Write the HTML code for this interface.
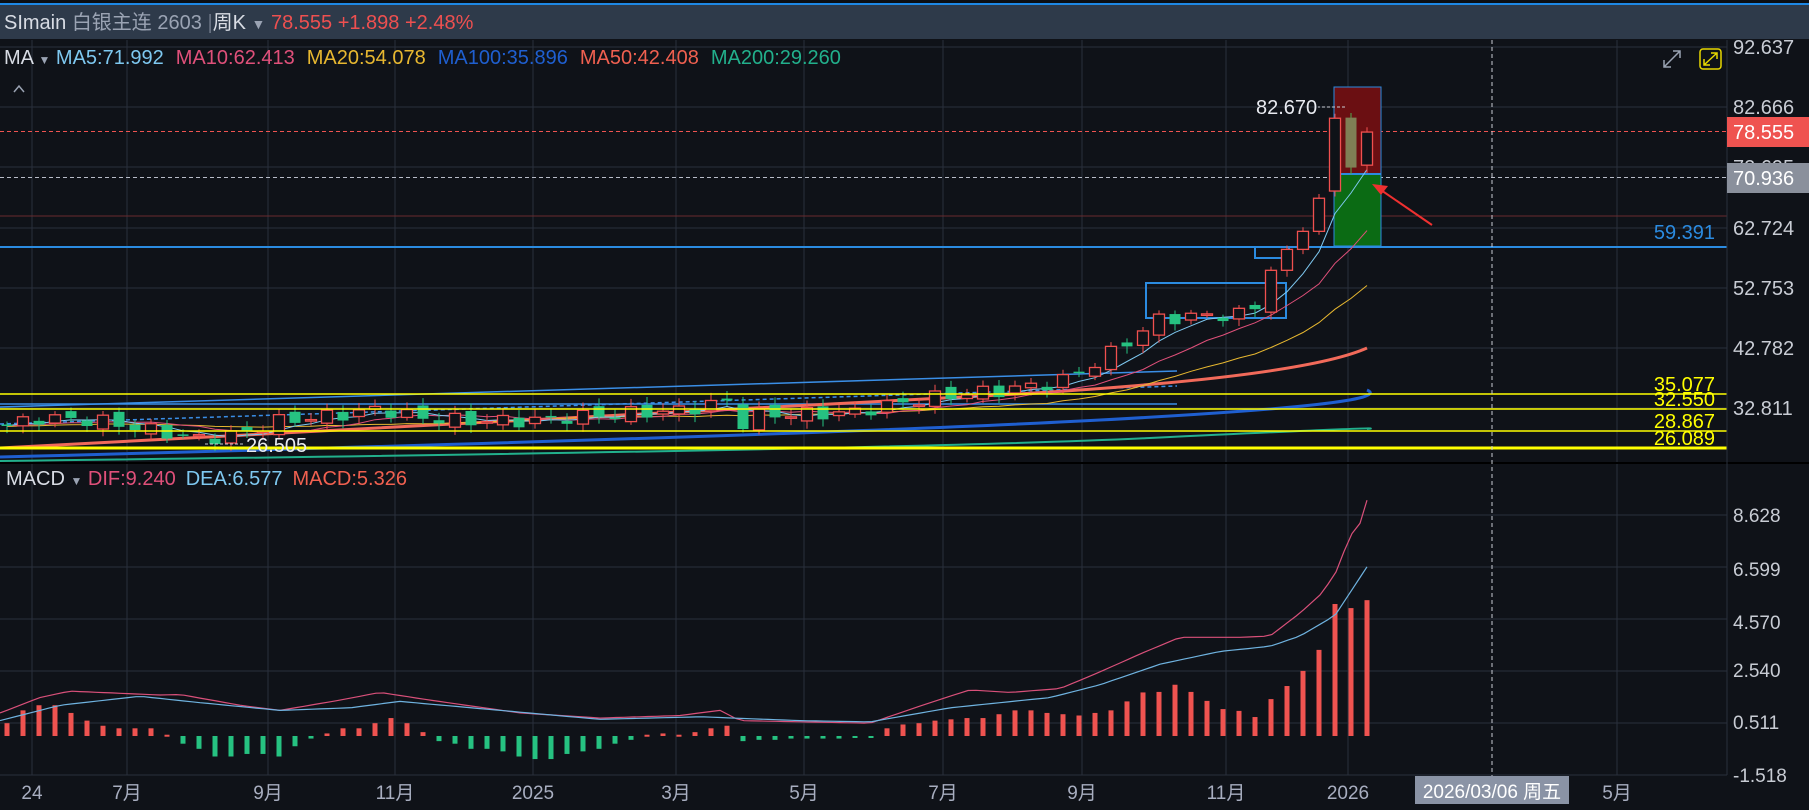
<!DOCTYPE html>
<html><head><meta charset="utf-8"><style>
html,body{margin:0;padding:0;background:#0f1218;width:1809px;height:810px;overflow:hidden}
svg{position:absolute;left:0;top:0}
text{font-family:"Liberation Sans","Noto Sans CJK SC",sans-serif}
</style></head><body>
<svg id="s" width="1809" height="810" xmlns="http://www.w3.org/2000/svg">
<rect width="1809" height="810" fill="#0f1218"/>
<rect x="0" y="0" width="1809" height="3" fill="#0c0f14"/>
<rect x="0" y="3" width="1809" height="2" fill="#1e88e5"/>
<rect x="0" y="5" width="1809" height="34" fill="#2e3a4a"/>
<g id="grid" stroke="#2a303c" stroke-width="1"></g>
<g id="main"></g>
<line x1="0" y1="463" x2="1809" y2="463" stroke="#000" stroke-width="2"/>
<line x1="1727" y1="40" x2="1727" y2="775" stroke="#2a303c"/>
<line x1="1492" y1="40" x2="1492" y2="776" stroke="#c8ccd4" stroke-dasharray="4,3"/>
<text x="4" y="29" font-size="20" fill="#d8dce4">SImain <tspan fill="#9aa3b3">白银主连 2603</tspan> <tspan fill="#6b7585">|</tspan><tspan fill="#d8dce4">周K</tspan> <tspan fill="#9aa3b3" font-size="14">▼</tspan>  <tspan fill="#ee5050">78.555 +1.898 +2.48%</tspan></text>
<text x="4" y="64" font-size="20" fill="#d8dce4">MA <tspan fill="#9aa3b3" font-size="12">▼</tspan> <tspan fill="#7ec8f0">MA5:71.992</tspan><tspan dx="12" fill="#e0507a">MA10:62.413</tspan><tspan dx="12" fill="#e8b830">MA20:54.078</tspan><tspan dx="12" fill="#1f5fd0">MA100:35.896</tspan><tspan dx="12" fill="#f06050">MA50:42.408</tspan><tspan dx="12" fill="#22b08c">MA200:29.260</tspan></text>
<path d="M14 92 L19 86 L24 92" stroke="#9aa3b3" stroke-width="1.5" fill="none"/>
<g stroke="#9aa3b3" stroke-width="1.5" fill="none"><path d="M1664 67 L1680 51 M1673 51 L1680 51 L1680 58 M1664 60 L1664 67 L1671 67"/></g>
<rect x="1700" y="49" width="21" height="20" rx="3" fill="none" stroke="#e8d800" stroke-width="1.5"/>
<path d="M1704 65 L1717 53 M1711 53 L1717 53 L1717 59 M1704 59 L1704 65 L1710 65" stroke="#e8d800" stroke-width="1.5" fill="none"/>
<g font-size="20" fill="#c8ccd4">
<text x="1733" y="54">92.637</text><text x="1733" y="114">82.666</text><text x="1733" y="174">72.695</text>
<text x="1733" y="235">62.724</text><text x="1733" y="295">52.753</text><text x="1733" y="355">42.782</text><text x="1733" y="415">32.811</text>
</g>
<rect x="1727" y="117" width="82" height="30" fill="#ef5350"/>
<text x="1733" y="139" font-size="20" fill="#fff">78.555</text>
<rect x="1727" y="163" width="82" height="30" fill="#8a909c"/>
<text x="1733" y="185" font-size="20" fill="#fff">70.936</text>
<text x="6" y="485" font-size="20" fill="#d8dce4">MACD <tspan fill="#9aa3b3" font-size="12">▼</tspan> <tspan fill="#e0507a">DIF:9.240</tspan><tspan dx="10" fill="#7ec8f0">DEA:6.577</tspan><tspan dx="10" fill="#f06050">MACD:5.326</tspan></text>
<g font-size="19" fill="#c8ccd4">
<text x="1733" y="522">8.628</text><text x="1733" y="576">6.599</text><text x="1733" y="629">4.570</text>
<text x="1733" y="677">2.540</text><text x="1733" y="729">0.511</text><text x="1733" y="782">-1.518</text>
</g>
<g font-size="19" fill="#a8aec0" text-anchor="middle">
<text x="32" y="799">24</text><text x="127" y="799">7月</text><text x="268" y="799">9月</text><text x="395" y="799">11月</text>
<text x="533" y="799">2025</text><text x="676" y="799">3月</text><text x="804" y="799">5月</text><text x="943" y="799">7月</text>
<text x="1082" y="799">9月</text><text x="1226" y="799">11月</text><text x="1348" y="799">2026</text><text x="1617" y="799">5月</text>
</g>
<rect x="1415" y="776" width="154" height="28" fill="#8a93a5"/>
<text x="1492" y="798" font-size="19" fill="#fff" text-anchor="middle">2026/03/06 周五</text>
</svg>
<script>
var NS="http://www.w3.org/2000/svg",S=document.getElementById('s'),G=document.getElementById('grid'),M=document.getElementById('main');
function el(p,t,a,txt){var e=document.createElementNS(NS,t);for(var k in a)e.setAttribute(k,a[k]);if(txt)e.textContent=txt;p.appendChild(e);return e;}
[47,107,167,228,288,348,408,515,567,619,671,723,775].forEach(function(y){el(G,'line',{x1:0,y1:y,x2:1727,y2:y});});
[32,127,268,395,533,676,804,943,1082,1226,1348,1617].forEach(function(x){el(G,'line',{x1:x,y1:40,x2:x,y2:775});});
function Y(p){return 47+(92.637-p)*6.017;}
function interp(k,x){for(var i=0;i<k.length-1;i++){if(x<=k[i+1][0]){var t=(x-k[i][0])/(k[i+1][0]-k[i][0]);return k[i][1]+t*(k[i+1][1]-k[i][1]);}}return k[k.length-1][1];}
el(M,'line',{x1:0,y1:404,x2:1177,y2:404,stroke:'#3a8ee6','stroke-width':1.5});
el(M,'line',{x1:0,y1:407,x2:1177,y2:371,stroke:'#3a8ee6','stroke-width':1.5});
el(M,'line',{x1:0,y1:424,x2:1177,y2:386,stroke:'#3a8ee6','stroke-width':1.5,'stroke-dasharray':'4,3'});
el(M,'path',{d:'M0 448 Q700 412 1000 395 T1367 348',stroke:'#f26a5a','stroke-width':3,fill:'none'});
el(M,'path',{d:'M0 457 Q800 436 1100 420 T1367 390',stroke:'#1f5fd0','stroke-width':3,fill:'none'});
el(M,'path',{d:'M0 461 Q900 450 1150 438 T1367 429',stroke:'#22b08c','stroke-width':2,fill:'none'});
el(M,'rect',{x:1146,y:283,width:140,height:35,fill:'none',stroke:'#2b8be0','stroke-width':2});
el(M,'rect',{x:1255,y:247,width:34,height:11,fill:'none',stroke:'#2b8be0','stroke-width':2});
el(M,'line',{x1:0,y1:216,x2:1727,y2:216,stroke:'#6a2a2e','stroke-width':1});
el(M,'line',{x1:0,y1:131.5,x2:1727,y2:131.5,stroke:'#ef5350','stroke-dasharray':'4,3'});
el(M,'line',{x1:0,y1:177.5,x2:1727,y2:177.5,stroke:'#b8bcc8','stroke-dasharray':'4,3'});
el(M,'rect',{x:1334,y:87,width:47,height:87,fill:'#6b0f12',stroke:'#2b8be0','stroke-width':1});
el(M,'rect',{x:1334,y:174,width:47,height:72,fill:'#0b6b14',stroke:'#2b8be0','stroke-width':1});
el(M,'line',{x1:1334,y1:174,x2:1381,y2:174,stroke:'#2b8be0','stroke-width':2});
el(M,'line',{x1:0,y1:247,x2:1727,y2:247,stroke:'#2b8be0','stroke-width':2});
var K=[[0,29.5],[40,31],[100,30.5],[150,29],[200,27.5],[230,28],[280,30.5],[340,31.5],[380,32.5],[420,31],[470,30.5],[530,30.5],[600,31.5],[680,32.2],[720,33.5],[730,33.8],[736,29.5],[760,31.5],[850,31.8],[900,33.5],[960,35],[1000,35.5],[1060,37],[1100,40.5],[1130,44],[1160,47.5],[1210,48],[1240,48.2],[1256,49.5],[1272,56.5],[1287,59],[1303,62],[1319,67.5],[1334,80],[1350,72.6],[1367,78.5]];
var C=[],O=[],N=86,prev=29.2;
for(var i=0;i<N;i++){var x=7+16*i,c=interp(K,x)+((i<80)?Math.sin(i*2.3)*1.1:0);var o=prev+((i<80)?Math.cos(i*1.7)*0.7:0);
if(i==83){o=68.7;c=80.8;}if(i==84){o=80.9;c=72.6;}if(i==85){o=73;c=78.5;}
O.push(o);C.push(c);prev=c;}
function ma(n){var pts=[];for(var i=0;i<N;i++){var s=0;for(var j=i-n+1;j<=i;j++){s+=(j<0?C[0]-(-j)*0.02:C[j]);}pts.push((7+16*i)+','+Y(s/n).toFixed(1));}return pts.join(' ');}
el(M,'polyline',{points:ma(20),stroke:'#e8b830','stroke-width':1,fill:'none'});
el(M,'polyline',{points:ma(10),stroke:'#e0507a','stroke-width':1,fill:'none'});
el(M,'polyline',{points:ma(5),stroke:'#7ec8f0','stroke-width':1,fill:'none'});
for(var i=0;i<N;i++){var x=7+16*i,o=O[i],c=C[i],hi=Math.max(o,c)+0.5+Math.abs(Math.sin(i*3.1))*0.8,lo=Math.min(o,c)-0.5-Math.abs(Math.cos(i*2.7))*0.8;
var up=c>=o,col=up?'#f0504f':'#26c281';if(i==84)col='#7f7f55';
el(M,'line',{x1:x,y1:Y(hi),x2:x,y2:Y(lo),stroke:up?'#f0504f':(i==84?'#4caf50':'#26c281'),'stroke-width':1});
var t=Y(Math.max(o,c)),h=Math.max(1.5,Math.abs(Y(o)-Y(c)));
el(M,'rect',{x:x-5.5,y:t,width:11,height:h,fill:up?'#0f1218':col,stroke:col,'stroke-width':up?1.3:0});}
[[394,1.5],[409,1.5],[431,1.5],[448,3]].forEach(function(a){el(M,'line',{x1:0,y1:a[0],x2:1727,y2:a[0],stroke:'#ffff00','stroke-width':a[1]});});
el(M,'line',{x1:1345,y1:107,x2:1318,y2:107,stroke:'#c8ccd4','stroke-dasharray':'3,2'});
el(M,'text',{x:1256,y:114,'font-size':20,fill:'#e8eaf0'},'82.670');
el(M,'line',{x1:205,y1:444,x2:244,y2:444,stroke:'#c8ccd4','stroke-dasharray':'3,2'});
el(M,'text',{x:246,y:452,'font-size':20,fill:'#e8eaf0'},'26.505');
el(M,'text',{x:1715,y:239,'font-size':20,fill:'#2b8be0','text-anchor':'end'},'59.391');
[['35.077',384],['32.550',399],['28.867',421],['26.089',438]].forEach(function(a){el(M,'text',{x:1715,y:a[1]+7,'font-size':20,fill:'#ffff00','text-anchor':'end'},a[0]);});
el(M,'line',{x1:1432,y1:225,x2:1378,y2:188,stroke:'#ef3030','stroke-width':2});
el(M,'path',{d:'M1372 184 L1388 186 L1381 195 Z',fill:'#ef3030'});
function VY(v){return 736-v*25.63;}
var H=[0.5,1.0,1.2,1.2,0.9,0.6,0.4,0.3,0.3,0.3,0.05,-0.3,-0.5,-0.8,-0.8,-0.7,-0.7,-0.8,-0.4,-0.1,0.1,0.3,0.3,0.5,0.7,0.5,0.15,-0.2,-0.3,-0.5,-0.5,-0.6,-0.8,-0.9,-0.9,-0.7,-0.6,-0.5,-0.3,-0.15,0.05,0.1,0.05,0.15,0.3,0.4,-0.2,-0.15,-0.15,-0.1,-0.1,-0.1,-0.1,-0.05,-0.05,0.3,0.45,0.5,0.6,0.65,0.7,0.7,0.85,1.0,1.0,0.9,0.85,0.8,0.9,1.0,1.35,1.7,1.72,2.0,1.72,1.37,1.05,0.98,0.74,1.44,1.95,2.54,3.36,5.15,4.99,5.3];
for(var i=0;i<N;i++){var v=H[i],x=7+16*i,y0=VY(0),y1=VY(v);el(M,'rect',{x:x-2.5,y:Math.min(y0,y1),width:5,height:Math.max(2,Math.abs(y1-y0)),fill:v>=0?'#ef5350':'#26c281'});}
function line(k,col){var p=[];for(var x=0;x<=1367;x+=8){p.push(x+','+VY(interp(k,x)).toFixed(1));}p.push('1367,'+VY(interp(k,1367)).toFixed(1));el(M,'polyline',{points:p.join(' '),stroke:col,'stroke-width':1.2,fill:'none'});}
line([[0,0.9],[40,1.5],[70,1.75],[160,1.6],[180,1.62],[240,1.2],[280,1.0],[340,1.4],[380,1.7],[430,1.4],[520,0.9],[600,0.7],[680,0.8],[720,1.0],[740,0.6],[870,0.5],[930,1.3],[970,1.8],[1010,1.7],[1060,1.85],[1100,2.5],[1140,3.2],[1180,3.85],[1240,3.85],[1270,3.9],[1300,4.8],[1320,5.5],[1335,6.3],[1350,7.8],[1360,8.3],[1367,9.2]],'#d9507a');
line([[0,0.6],[60,1.2],[140,1.55],[200,1.3],[280,1.0],[350,1.1],[400,1.35],[500,1.0],[600,0.65],[700,0.75],[800,0.6],[870,0.55],[950,1.1],[1050,1.5],[1100,2.0],[1160,2.8],[1220,3.3],[1270,3.5],[1300,3.9],[1335,4.7],[1367,6.6]],'#6fb3e0');
</script>
</body></html>
